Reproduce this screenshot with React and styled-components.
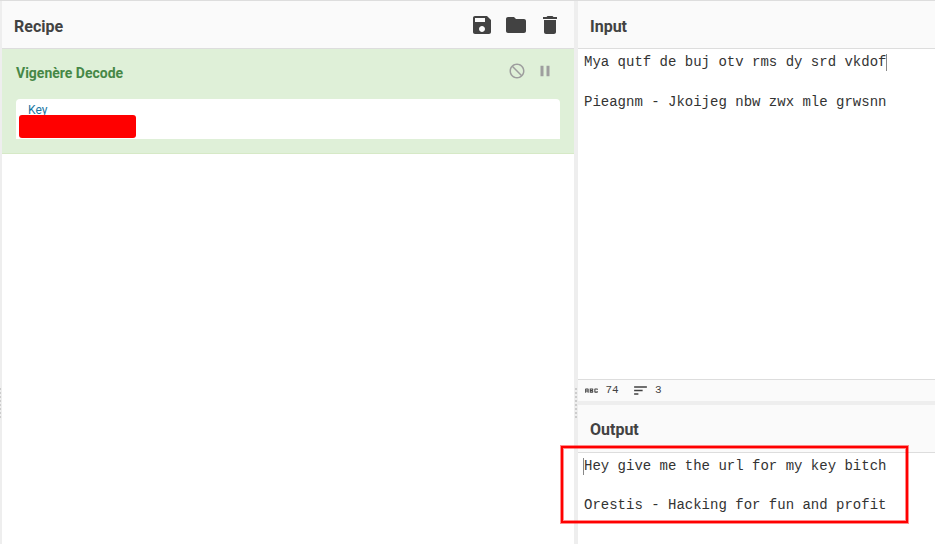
import React from "react";
import styled, { createGlobalStyle } from "styled-components";

const Global = createGlobalStyle`
  * { box-sizing: border-box; }
  html, body { margin: 0; height: 100%; overflow: hidden; }
  body { background: #fff; color: #424242; font-family: Roboto, sans-serif; }
`;

const Workspace = styled.main`
  position: relative;
  display: grid;
  grid-template-columns: 2px 572px 4px 1fr;
  width: 935px;
  height: 544px;
  border-top: 1px solid #ddd;
  overflow: hidden;
`;

const Gutter = styled.div`
  display: flex;
  align-items: flex-start;
  background: #eee;
  padding-top: 387px;
  padding-left: ${(p) => p.$inset || 0}px;
`;

const Grip = styled.div`
  width: ${(p) => p.$width}px;
  height: 30px;
  background: repeating-linear-gradient(#ccc 0 2px, transparent 2px 4px);
`;

const Column = styled.section`
  display: flex;
  flex-direction: column;
  min-width: 0;
`;

const Title = styled.header`
  display: flex;
  align-items: center;
  justify-content: space-between;
  flex: none;
  height: 48px;
  padding: ${(p) => p.$top}px 12px 0;
  background: #fafafa;
  border-bottom: 1px solid #ddd;
  font-size: 16px;
  font-weight: 700;
  line-height: 24px;
`;

const Controls = styled.div`
  display: flex;
  gap: ${(p) => p.$gap}px;
  margin-top: ${(p) => p.$shift}px;
  color: ${(p) => p.$color};
`;

const Glyph = styled.svg`
  display: block;
  flex: none;
  width: ${(p) => p.$size}px;
  height: ${(p) => p.$size}px;
  fill: currentColor;
`;

const Operation = styled.article`
  height: 105px;
  padding: 13px 14px 0;
  background: #dff0d8;
  border-bottom: 1px solid #d6e9c6;
`;

const OperationHead = styled.div`
  display: flex;
  justify-content: space-between;
  height: 37px;
  padding-right: 6px;
`;

const OperationName = styled.div`
  color: #468847;
  font-size: 14px;
  font-weight: 700;
  line-height: 22px;
`;

const Argument = styled.div`
  height: 40px;
  padding: 4px 3px 0;
  background: #fff;
  border-radius: 4px 4px 0 0;
`;

const ArgumentLabel = styled.div`
  height: 12px;
  padding-left: 9px;
  color: #1976a3;
  font-size: 12px;
  line-height: 14px;
`;

const Redaction = styled.div`
  position: relative;
  width: 117px;
  height: 23px;
  background: #f00;
  border-radius: 3px;
`;

const Editor = styled.div`
  height: ${(p) => p.$height}px;
  padding: 3px 6px 0;
  font: 14px/20px "Liberation Mono", monospace;
  color: #333;
  white-space: pre;
`;

const TextLine = styled.div`
  display: flex;
  height: ${(p) => p.$height}px;
`;

const Caret = styled.span`
  width: 1px;
  height: 17px;
  margin: 2px ${(p) => (p.$before ? "0 0 -1px" : "-1px 0 0")};
  background: #888;
`;

const StatusBar = styled.footer`
  display: flex;
  align-items: center;
  flex: none;
  height: 22px;
  padding: 0 5px 1px;
  background: #fafafa;
  border-top: 1px solid #ddd;
  font: 11px/18px "Liberation Mono", monospace;
`;

const Stat = styled.div`
  display: flex;
  align-items: center;
  gap: ${(p) => p.$gap}px;
  width: 49px;
`;

const Splitter = styled.div`
  flex: none;
  height: 4px;
  background: #eee;
`;

const Highlight = styled.div`
  position: absolute;
  left: 561px;
  top: 445px;
  width: 347px;
  height: 77px;
  border: 2px solid #f00;
  box-shadow: 0 0 0 1px rgba(255, 0, 0, 0.45), inset 0 0 0 1px rgba(255, 0, 0, 0.45);
`;

const PATHS = {
  save: "M17 3H5c-1.11 0-2 .9-2 2v14c0 1.1.89 2 2 2h14c1.1 0 2-.9 2-2V7l-4-4zm-5 16c-1.66 0-3-1.34-3-3s1.34-3 3-3 3 1.34 3 3-1.34 3-3 3zm3-10H5V5h10v4z",
  folder: "M10 4H4c-1.1 0-1.99.9-1.99 2L2 18c0 1.1.9 2 2 2h16c1.1 0 2-.9 2-2V8c0-1.1-.9-2-2-2h-8l-2-2z",
  trash: "M6 19c0 1.1.9 2 2 2h8c1.1 0 2-.9 2-2V7H6v12zM19 4h-3.5l-1-1h-5l-1 1H5v2h14V4z",
  block: "M12 2C6.48 2 2 6.48 2 12s4.48 10 10 10 10-4.48 10-10S17.52 2 12 2zM4 12c0-4.42 3.58-8 8-8 1.85 0 3.55.63 4.9 1.69L5.69 16.9C4.63 15.55 4 13.85 4 12zm8 8c-1.85 0-3.55-.63-4.9-1.69L18.31 7.1C19.37 8.45 20 10.15 20 12c0 4.42-3.58 8-8 8z",
  pause: "M6 19h4V5H6v14zm8-14v14h4V5h-4z",
  abc: "M21 11h-1.5v-.5h-2v3h2V13H21v1c0 .55-.45 1-1 1h-3c-.55 0-1-.45-1-1v-4c0-.55.45-1 1-1h3c.55 0 1 .45 1 1v1zM8 10v5H6.5v-1.5h-2V15H3v-5c0-.55.45-1 1-1h3c.55 0 1 .45 1 1zm-1.5.5h-2V12h2v-1.5zm7 1.5c.55 0 1 .45 1 1v1c0 .55-.45 1-1 1h-4V9h4c.55 0 1 .45 1 1v1c0 .55-.45 1-1 1zM11 10.5v.75h2v-.75h-2zm2 2.25h-2v.75h2v-.75z",
  lines: "M3 18h6v-2H3v2zM3 6v2h18V6H3zm0 7h12v-2H3v2z",
};

function Icon({ name, size, flip }) {
  return (
    <Glyph $size={size} viewBox="0 0 24 24" aria-hidden="true">
      <path d={PATHS[name]} transform={flip ? "translate(24 0) scale(-1 1)" : undefined} />
    </Glyph>
  );
}

export default function App() {
  return (
    <>
      <Global />
      <Workspace>
        <Gutter><Grip $width={1} /></Gutter>
        <Column>
          <Title $top={4}>
            Recipe
            <Controls $gap={10} $shift={-4} $color="#424242">
              <Icon name="save" size={24} />
              <Icon name="folder" size={24} />
              <Icon name="trash" size={24} />
            </Controls>
          </Title>
          <Operation>
            <OperationHead>
              <OperationName>Vigenère Decode</OperationName>
              <Controls $gap={10} $shift={0} $color="#9e9e9e">
                <Icon name="block" size={18} flip />
                <Icon name="pause" size={18} />
              </Controls>
            </OperationHead>
            <Argument>
              <ArgumentLabel>Key</ArgumentLabel>
              <Redaction />
            </Argument>
          </Operation>
        </Column>
        <Gutter $inset={1}><Grip $width={2} /></Gutter>
        <Column>
          <Title $top={4}>Input</Title>
          <Editor $height={330}>
            <TextLine $height={20}>Mya qutf de buj otv rms dy srd vkdof<Caret /></TextLine>
            <TextLine $height={20} />
            <TextLine $height={20}>Pieagnm - Jkoijeg nbw zwx mle grwsnn</TextLine>
          </Editor>
          <StatusBar>
            <Stat $gap={5.5}><Icon name="abc" size={17} />74</Stat>
            <Stat $gap={6}><Icon name="lines" size={17} />3</Stat>
          </StatusBar>
          <Splitter />
          <Title $top={3}>Output</Title>
          <Editor $height={91}>
            <TextLine $height={20}><Caret $before />Hey give me the url for my key bitch</TextLine>
            <TextLine $height={19} />
            <TextLine $height={20}>Orestis - Hacking for fun and profit</TextLine>
          </Editor>
        </Column>
        <Highlight />
      </Workspace>
    </>
  );
}
